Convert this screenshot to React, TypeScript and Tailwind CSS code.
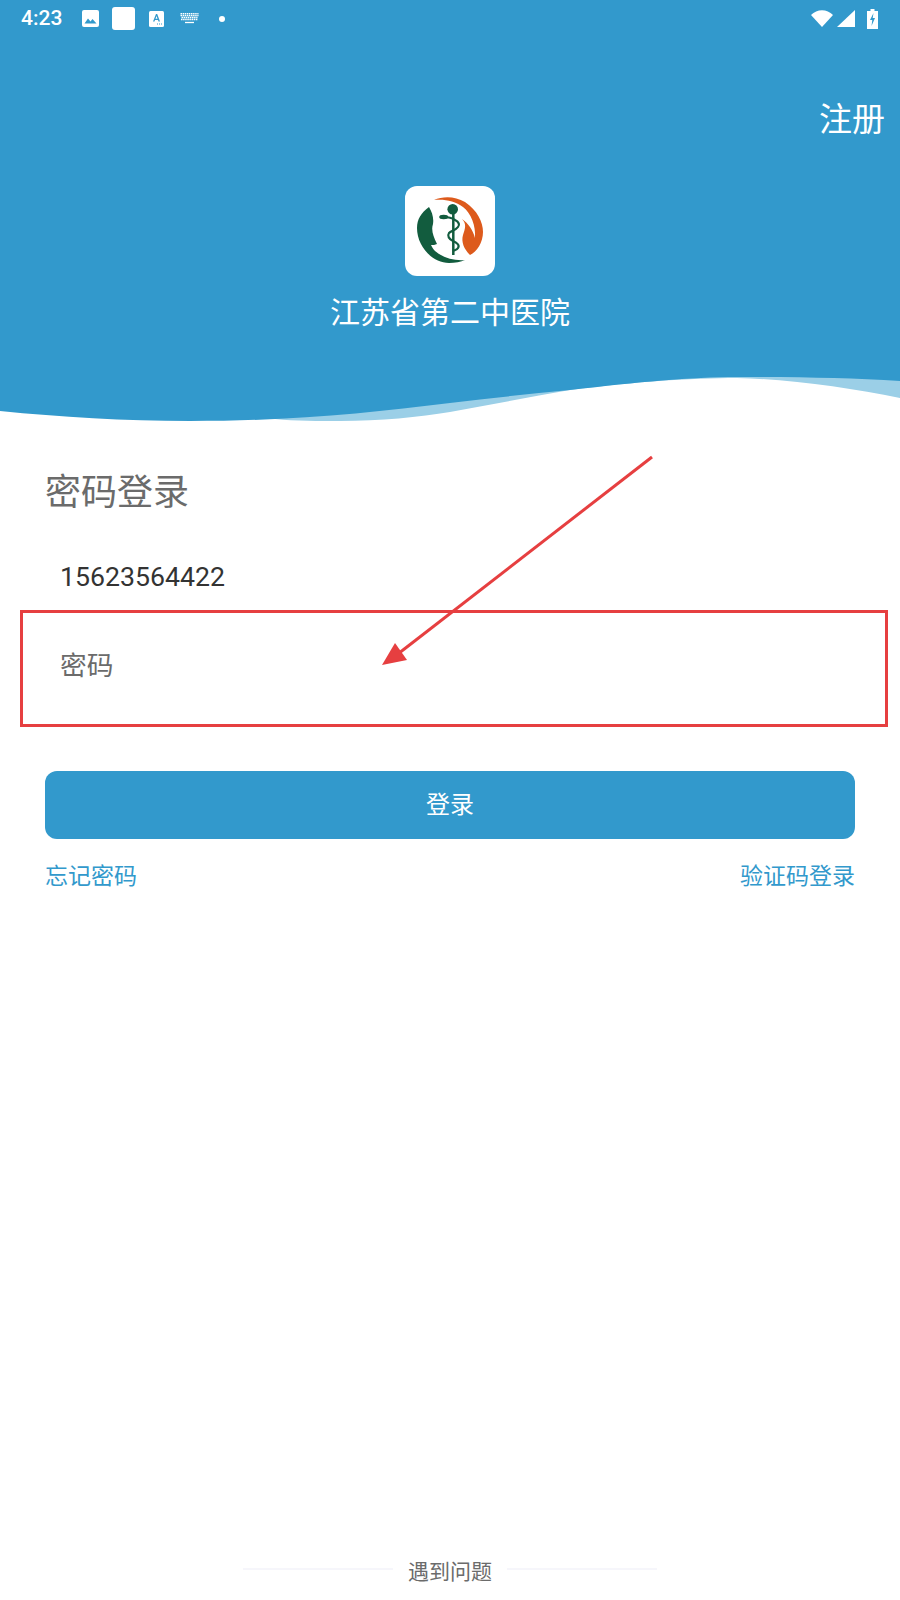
const cjk = { fontFamily: '"Roboto","Noto Sans CJK SC",sans-serif' };

function Logo() {
  return (
    <svg viewBox="0 0 90 90" className="w-[90px] h-[90px]">
      <rect width="90" height="90" rx="12" fill="#fff" />
      <path d="M24 21 C16 27 12 33 12 42 C12 60 27 77 44 77 C50 77 56 76 60 74 C50 75 38 72 30 65 C28 63 27 61 26 59 C28 59 30 59 32 58 C28 50 26 44 28 38 C29 32 27 26 24 21 Z" fill="#125c3e" />
      <path d="M29 14 C38 10 50 10 60 16 C72 24 78 36 78 46 C78 56 72 66 65 69 C59 63 56 56 58 49 C60 43 62 38 57 33 C63 37 68 44 70 52 C71 40 66 27 58 21 C50 15 40 13 29 14 Z" fill="#dd5a1c" />
      <circle cx="47.700" cy="23.300" r="5.300" fill="#125c3e" />
      <path d="M48.300 25 L48.300 69" stroke="#125c3e" strokeWidth="2.500" fill="none" />
      <path d="M39 31 C43 31 47 32 50 34 C54 36 55 39 53 41 C51 44 46 45 44 47 C42 50 44 53 48 55 C52 57 55 59 53 62 C52 64 50 64 48 65" stroke="#125c3e" strokeWidth="2.200" fill="none" />
      <ellipse cx="38.700" cy="31" rx="4.500" ry="2.200" fill="#125c3e" />
    </svg>
  );
}

function StatusBar() {
  return (
    <div className="h-[37px] flex items-center pl-[21px] pr-[22px] text-white">
      <span className="text-[21px] font-medium w-[61px]" style={{ fontFamily: "Roboto,sans-serif" }}>4:23</span>
      <svg viewBox="0 0 17 17" className="w-[17px] h-[17px]">
        <rect width="17" height="17" rx="2" fill="#fff" />
        <path d="M2.500 13.500 L6 8.500 L8.500 11.500 L10.500 9 L14.500 13.500 Z" fill="#3299cc" />
      </svg>
      <div className="w-[23px] h-[23px] rounded-[3px] bg-white ml-[13px]" />
      <svg viewBox="0 0 15 16" className="w-[15px] h-[16px] ml-[14px]">
        <rect width="15" height="16" rx="1.500" fill="#fff" />
        <path d="M4 10.500 L7 3 H8.200 L11 10.500 H9.500 L9 9 H6 L5.500 10.500 Z M6.500 7.800 H8.500 L7.500 5 Z" fill="#3299cc" />
        <path d="M8 13 h1 M10 13 h1 M12 13 h1" stroke="#3299cc" strokeWidth="1" />
      </svg>
      <svg viewBox="0 0 19 11" className="w-[19px] h-[11px] ml-[16px]">
        <path d="M0.500 0.500 H18.500 M0.500 2.500 H18.500 M1.500 4.500 H17.500 M1 6.500 H18 " stroke="#fff" strokeWidth="1.300" strokeDasharray="1.500 .6" fill="none" />
        <path d="M5 9.500 H14" stroke="#fff" strokeWidth="1.300" />
      </svg>
      <div className="w-[6px] h-[6px] rounded-full bg-white ml-[20px]" />
      <div className="flex-1" />
      <svg viewBox="0 0 22 17" className="w-[22px] h-[17px]">
        <path d="M0 5 C6 -1.500 16 -1.500 22 5 L11 17 Z" fill="#fff" />
      </svg>
      <svg viewBox="0 0 18 17" className="w-[18px] h-[17px] ml-[4px]">
        <path d="M0 17 L18 0 V17 Z" fill="#fff" />
      </svg>
      <svg viewBox="0 0 11 20" className="w-[11px] h-[20px] ml-[12px]">
        <path d="M3.500 0 H7.500 V2 H11 V20 H0 V2 H3.500 Z" fill="#fff" />
        <path d="M6.500 4 L3 11 H5.300 L4.500 17 L8 9 H5.700 Z" fill="#3299cc" />
      </svg>
    </div>
  );
}

function Wave() {
  return (
    <svg viewBox="0 0 900 46" className="block w-[900px] h-[46px]">
      <path d="M275 44 C295 46 320 46 340 46 C380 46 420 42 450 37 C490 30 530 22 570 15 C630 7 690 3 737 3 C790 4 850 13 900 23 V0 H275 Z" fill="#9bcfe7" />
      <path d="M0 36 C60 42 125 46 190 46 C290 46 370 38 450 28 C490 23 530 19 570 15 C640 7 690 2 737 2 C800 2 850 3 900 6 V0 H0 Z" fill="#3299cc" />
    </svg>
  );
}

export default function App() {
  return (
    <div className="relative w-[900px] h-[1600px] bg-white overflow-hidden flex flex-col" style={cjk}>
      <div className="bg-[#3299cc] h-[375px] flex flex-col">
        <StatusBar />
        <div className="flex justify-end pr-[15px] pt-[60px] text-white text-[33px] leading-[46px]">注册</div>
        <div className="flex justify-center mt-[43px]"><Logo /></div>
        <div className="text-center text-white text-[30px] leading-[40px] mt-[17px]">江苏省第二中医院</div>
      </div>
      <Wave />
      <div className="px-[45px] flex flex-col flex-1">
        <div className="text-[36px] leading-[50px] text-[#6b6b6b] mt-[47px]">密码登录</div>
        <div className="h-[88px] flex items-center px-[15px] text-[26.700px] text-[#333] mt-[15px]">15623564422</div>
        <div className="h-[88px] flex items-center px-[15px] text-[26.700px] text-[#6b6b6b] pt-[2px]">密码</div>
        <div className="h-[68px] rounded-[12px] bg-[#3299cc] text-white text-[24px] flex items-center justify-center mt-[62px]">登录</div>
        <div className="flex justify-between text-[23px] text-[#3299cc] mt-[20px] leading-[36px]">
          <span>忘记密码</span>
          <span>验证码登录</span>
        </div>
        <div className="flex-1" />
        <div className="flex items-center justify-center text-[21px] text-[#6b6b6b] mb-[14px] leading-[28px]">
          <div className="w-[150px] h-[2px] bg-[#f6f6fb] mb-[6px]" />
          <span className="mx-[15px]">遇到问题</span>
          <div className="w-[150px] h-[2px] bg-[#f6f6fb] mb-[6px]" />
        </div>
      </div>

      <div className="absolute left-[20px] top-[610px] w-[868px] h-[117px] border-[3px] border-[#e63f40]" />
      <svg className="absolute left-0 top-0 pointer-events-none" width="900" height="800" viewBox="0 0 900 800">
        <path d="M652 457 L394 657" stroke="#e63f40" strokeWidth="3" fill="none" />
        <path d="M382 665 L395 643 L407 660 Z" fill="#e63f40" />
      </svg>
    </div>
  );
}
